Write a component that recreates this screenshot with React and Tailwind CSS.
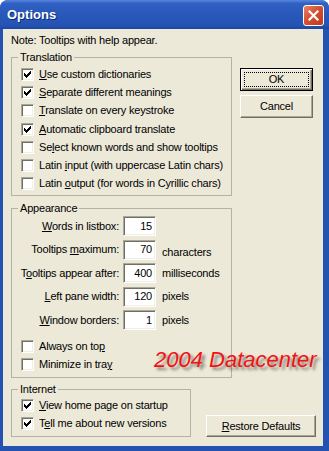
const Check = ({ checked }) => (
  <span className="w-[13px] h-[13px] shrink-0 flex items-center justify-center bg-white border border-t-[#aca899] border-l-[#aca899] border-b-white border-r-white shadow-[inset_1px_1px_0_#716f64,inset_-1px_-1px_0_#f1efe2]">
    {checked && (
      <svg width="7" height="7" viewBox="0 0 7 7" shapeRendering="crispEdges">
        <rect x="0" y="2" width="1" height="3" fill="#000" />
        <rect x="1" y="3" width="1" height="3" fill="#000" />
        <rect x="2" y="4" width="1" height="3" fill="#000" />
        <rect x="3" y="3" width="1" height="3" fill="#000" />
        <rect x="4" y="2" width="1" height="3" fill="#000" />
        <rect x="5" y="1" width="1" height="3" fill="#000" />
        <rect x="6" y="0" width="1" height="3" fill="#000" />
      </svg>
    )}
  </span>
);

const CheckRow = ({ checked, tall, children }) => (
  <div className={`flex items-center gap-[5px] pl-[9px] ${tall ? "h-[18.3px]" : "h-[18px]"}`}>
    <Check checked={checked} />
    <span className="whitespace-nowrap">{children}</span>
  </div>
);

const Field = ({ label, value, suffix, low }) => (
  <div className="h-[23.5px] flex items-center">
    <span className="w-[107px] text-right whitespace-nowrap">{label}</span>
    <div className="ml-[4px] w-[33px] h-[20px] flex items-center justify-end pr-[3px] bg-white border border-t-[#aca899] border-l-[#aca899] border-b-white border-r-white shadow-[inset_1px_1px_0_#716f64,inset_-1px_-1px_0_#f1efe2]">
      {value}
    </div>
    {suffix && (
      <span className={`ml-[6px] whitespace-nowrap ${low ? "pt-[6px]" : ""}`}>{suffix}</span>
    )}
  </div>
);

const Group = ({ title, className, children }) => (
  <fieldset className={`border border-[#b5b2a3] ${className}`}>
    <legend className="ml-[6px] px-[2px] leading-[13px]">{title}</legend>
    {children}
  </fieldset>
);

export default function App() {
  return (
    <div className="w-[329px] h-[451px] relative flex flex-col bg-[#2352b0] rounded-t-[8px] overflow-hidden font-['Liberation_Sans',Arial,sans-serif] text-[11px] leading-[13px] tracking-[-0.2px] text-black">
      {/* title bar */}
      <div className="h-[29px] shrink-0 flex items-center pl-[7px] pr-[5px] bg-[linear-gradient(#5a87de_0%,#2f60c3_12%,#2858b9_50%,#2453b3_88%,#1d47a0_100%)]">
        <span className="text-white font-bold text-[13px] tracking-[0px] [text-shadow:1px_1px_0_#0c2a78]">
          Options
        </span>
        <div className="ml-auto mt-[1px] w-[21px] h-[21px] rounded-[3px] border border-white bg-[linear-gradient(135deg,#e8846a_0%,#d5502f_45%,#bf3a1c_100%)] flex items-center justify-center">
          <svg width="11" height="11" viewBox="0 0 11 11">
            <path d="M1.5 1.5 L9.5 9.5 M9.5 1.5 L1.5 9.5" stroke="#fff" strokeWidth="2.2" strokeLinecap="square" />
          </svg>
        </div>
      </div>

      {/* client area */}
      <div className="flex-1 ml-[3px] mr-[6px] mb-[5px] bg-[#ece9d8] pl-[8px] pt-[5px]">
        <div className="h-[13px] whitespace-nowrap">Note: Tooltips with help appear.</div>

        <div className="flex mt-[4px]">
          <div className="w-[221px] shrink-0 flex flex-col">
            <Group title="Translation" className="pt-[1px] pb-[1.5px]">
              <CheckRow checked tall><u>U</u>se custom dictionaries</CheckRow>
              <CheckRow checked tall><u>S</u>eparate different meanings</CheckRow>
              <CheckRow tall><u>T</u>ranslate on every keystroke</CheckRow>
              <CheckRow checked tall><u>A</u>utomatic clipboard translate</CheckRow>
              <CheckRow tall>Se<u>l</u>ect known words and show tooltips</CheckRow>
              <CheckRow tall>Latin <u>i</u>nput (with uppercase Latin chars)</CheckRow>
              <CheckRow tall>Latin <u>o</u>utput (for words in Cyrillic chars)</CheckRow>
            </Group>

            <Group title="Appearance" className="mt-[6px] pb-[3.5px]">
              <Field label={<><u>W</u>ords in listbox:</>} value="15" />
              <Field label={<>Tooltips <u>m</u>aximum:</>} value="70" suffix="characters" low />
              <Field label={<>T<u>o</u>oltips appear after:</>} value="400" suffix="milliseconds" />
              <Field label={<><u>L</u>eft pane width:</>} value="120" suffix="pixels" />
              <Field label={<><u>W</u>indow borders:</>} value="1" suffix="pixels" />
              <div className="mt-[5.5px]">
                <CheckRow>Always on to<u>p</u></CheckRow>
                <CheckRow>Minimize in tra<u>y</u></CheckRow>
              </div>
            </Group>
          </div>

          <div className="ml-[8px] mt-[17px] flex flex-col gap-[4px]">
            <div className="w-[73px] h-[23px] p-[3px] flex bg-[#ece9d8] border border-black shadow-[inset_1px_1px_0_#fff,inset_-1px_-1px_0_#716f64,inset_-2px_-2px_0_#aca899]">
              <div className="flex-1 flex items-center justify-center border border-dotted border-black">
                OK
              </div>
            </div>
            <div className="w-[73px] h-[23px] flex items-center justify-center bg-[#ece9d8] border border-t-white border-l-white border-b-[#716f64] border-r-[#716f64] shadow-[inset_-1px_-1px_0_#aca899]">
              Cancel
            </div>
          </div>
        </div>

        <div className="flex items-end mt-[5px]">
          <Group title="Internet" className="w-[180px] shrink-0 pb-[4px]">
            <CheckRow checked><u>V</u>iew home page on startup</CheckRow>
            <CheckRow checked>T<u>e</u>ll me about new versions</CheckRow>
          </Group>
          <div className="ml-[15px] w-[110px] h-[22px] flex items-center justify-center bg-[#ece9d8] border border-t-white border-l-white border-b-[#716f64] border-r-[#716f64] shadow-[inset_-1px_-1px_0_#aca899] whitespace-nowrap">
            <u>R</u>estore Defaults
          </div>
        </div>
      </div>

      {/* watermark */}
      <div className="absolute left-[154px] top-[349px] text-[22px] leading-[22px] italic tracking-normal text-[#f51212] whitespace-nowrap [text-shadow:3px_3px_3px_rgba(0,0,0,0.45)]">
        2004 Datacenter
      </div>
    </div>
  );
}
